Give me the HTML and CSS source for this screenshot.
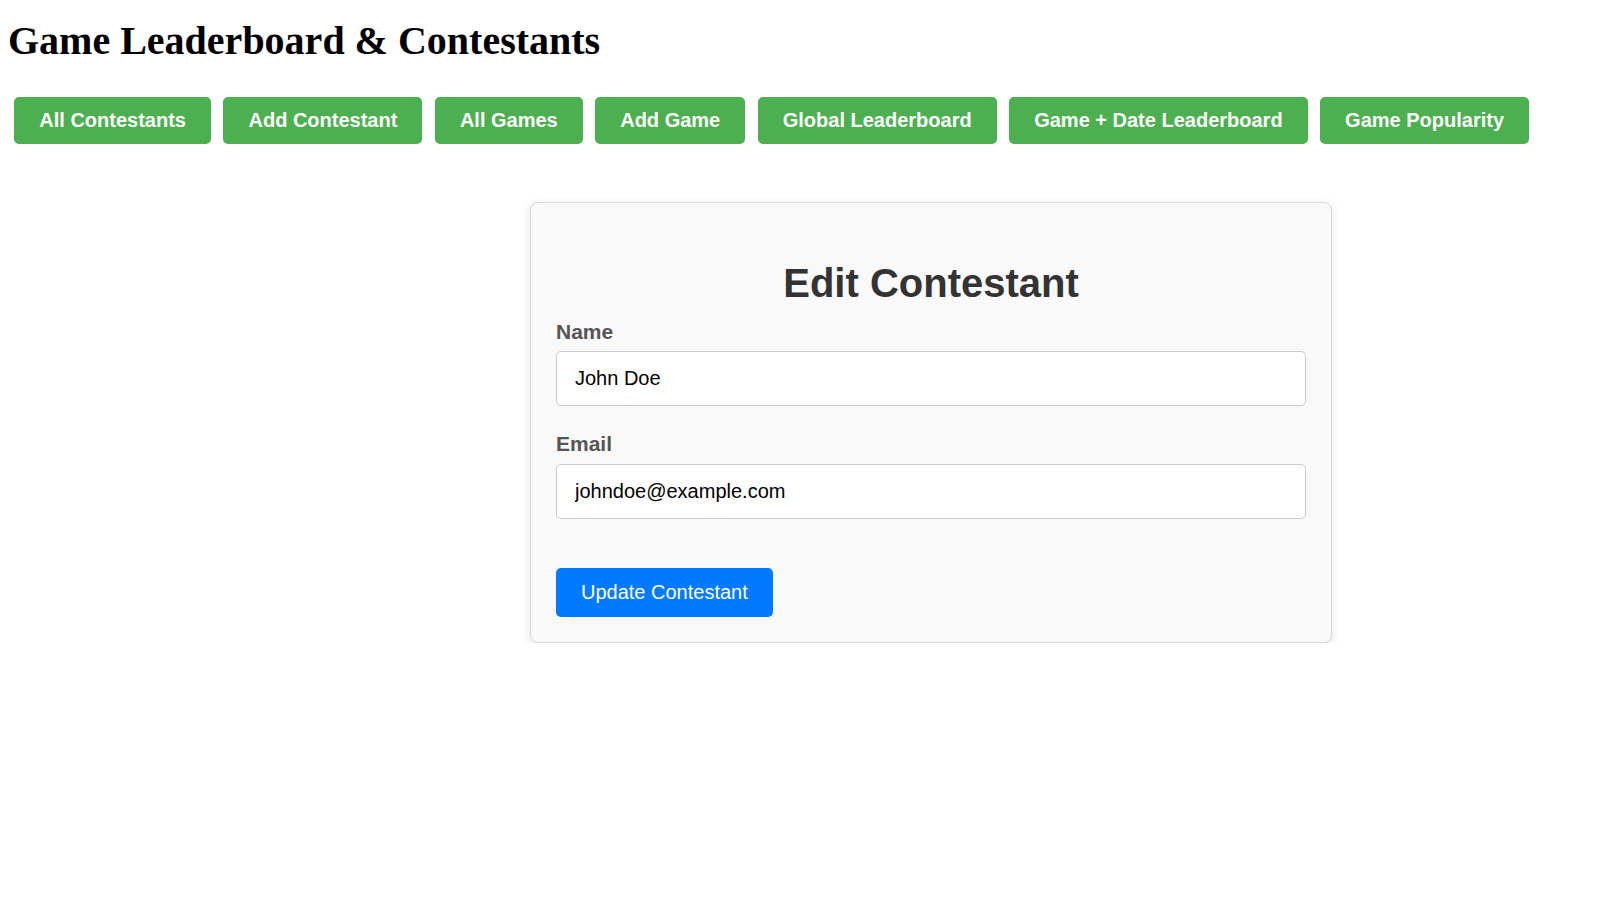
FILE: index.html
```html
<!DOCTYPE html>
<html lang="en">
<head>
<meta charset="utf-8">
<title>Game Leaderboard &amp; Contestants</title>
<link rel="stylesheet" href="styles.css">
</head>
<body>
<div class="page">
  <h1 class="site-title">Game Leaderboard &amp; Contestants</h1>
  <nav class="nav">
    <a class="nav-btn" href="#">All Contestants</a>
    <a class="nav-btn" href="#">Add Contestant</a>
    <a class="nav-btn" href="#">All Games</a>
    <a class="nav-btn" href="#">Add Game</a>
    <a class="nav-btn" href="#">Global Leaderboard</a>
    <a class="nav-btn" href="#">Game + Date Leaderboard</a>
    <a class="nav-btn" href="#">Game Popularity</a>
  </nav>
  <main class="card">
    <h2 class="card-title">Edit Contestant</h2>
    <form class="form">
      <div class="form-group">
        <label class="form-label" for="name">Name</label>
        <input class="form-input" id="name" type="text" value="John Doe">
      </div>
      <div class="form-group">
        <label class="form-label" for="email">Email</label>
        <input class="form-input" id="email" type="email" value="johndoe@example.com">
      </div>
      <button class="submit-btn" type="button">Update Contestant</button>
    </form>
  </main>
</div>
</body>
</html>
```
FILE: styles.css
```css
html, body {
  margin: 0;
  padding: 0;
  background: #ffffff;
}

.page {
  padding: 17px 8px 0 8px;
}

.site-title {
  margin: 0;
  font-family: "Liberation Serif", "Times New Roman", serif;
  font-weight: bold;
  font-size: 40px;
  line-height: normal;
  color: #000;
}

.nav {
  display: flex;
  gap: 12.5px;
  margin-top: 33.3px;
  padding-left: 6.3px;
}

.nav-btn {
  display: block;
  padding: 12px 25px;
  background: #4caf50;
  color: #ffffff;
  font-family: "Liberation Sans", Arial, sans-serif;
  font-weight: bold;
  font-size: 20px;
  line-height: 23px;
  text-decoration: none;
  border-radius: 5px;
  white-space: nowrap;
}

.card {
  display: block;
  width: 750px;
  margin: 57.4px 0 0 522px;
  padding: 25px;
  background: #f9f9f9;
  border: 1px solid #d9d9d9;
  border-radius: 8px;
  box-shadow: 0 2px 10px rgba(0, 0, 0, 0.12);
  font-family: "Liberation Sans", Arial, sans-serif;
}

.card-title {
  margin: 33px 0 14px 0;
  text-align: center;
  font-size: 40px;
  font-weight: bold;
  line-height: normal;
  color: #333333;
}

.form {
  margin: 0;
}

.form-group {
  margin-bottom: 26px;
}

.form-label {
  display: block;
  margin-bottom: 7.5px;
  font-size: 21px;
  font-weight: bold;
  line-height: normal;
  color: #555555;
}

.form-input {
  display: block;
  box-sizing: border-box;
  width: 100%;
  height: 55px;
  margin: 0;
  padding: 0 18px;
  border: 1px solid #cccccc;
  border-radius: 5px;
  background: #ffffff;
  font-family: "Liberation Sans", Arial, sans-serif;
  font-size: 20px;
  color: #000000;
  outline: none;
}

.submit-btn {
  display: block;
  margin-top: 49.6px;
  padding: 12px 25px;
  border: none;
  border-radius: 5px;
  background: #007bff;
  color: #ffffff;
  font-family: "Liberation Sans", Arial, sans-serif;
  font-size: 20px;
  line-height: 25px;
  cursor: pointer;
}
```
